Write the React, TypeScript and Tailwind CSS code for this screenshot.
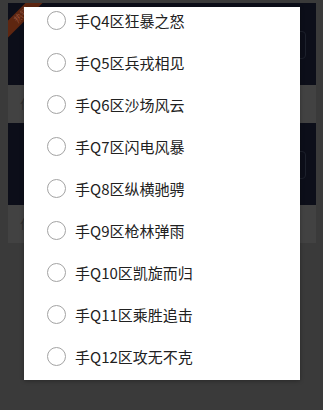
const servers = [
  "手Q4区狂暴之怒",
  "手Q5区兵戎相见",
  "手Q6区沙场风云",
  "手Q7区闪电风暴",
  "手Q8区纵横驰骋",
  "手Q9区枪林弹雨",
  "手Q10区凯旋而归",
  "手Q11区乘胜追击",
  "手Q12区攻无不克",
];

function BackgroundCard({ top }: { top?: boolean }) {
  return (
    <div className="w-[308px]">
      <div className="relative h-[82px] overflow-hidden bg-[#0c0e19]">
        {top && (
          <div className="absolute -left-[14px] top-[6px] w-[56px] -rotate-45 bg-[#5e2610] text-center text-[9px] leading-[12px] text-[#94503a]">
            热销
          </div>
        )}
        <div className="absolute right-[10px] top-[28px] h-[28px] w-[60px] rounded-sm border border-[#1c202b]" />
      </div>
      <div className="flex h-[38px] items-center bg-[#424242] pl-[12px] text-[12px] text-[#2a2a2a]">
        付款
      </div>
    </div>
  );
}

export default function App() {
  return (
    <div
      className="relative h-[410px] w-[323px] overflow-hidden bg-[#3a3a3a]"
      style={{ fontFamily: '"Noto Sans CJK SC", "Noto Sans", sans-serif' }}
    >
      <div className="flex flex-col pl-[8px] pt-[3px]">
        <BackgroundCard top />
        <BackgroundCard />
      </div>

      <div className="absolute left-[24px] top-[7px] h-[373px] w-[276px] overflow-hidden bg-white shadow-[0_1px_4px_rgba(0,0,0,0.3)]">
        <div className="-mt-[7px] flex flex-col">
          {servers.map((name) => (
            <div key={name} className="flex h-[41.9px] shrink-0 items-center pl-[23px]">
              <span className="h-[19px] w-[19px] shrink-0 rounded-full border-[1.5px] border-[#a3a3a3]" />
              <span className="ml-[9px] text-[15px] leading-none text-[#212121]">{name}</span>
            </div>
          ))}
        </div>
      </div>
    </div>
  );
}
